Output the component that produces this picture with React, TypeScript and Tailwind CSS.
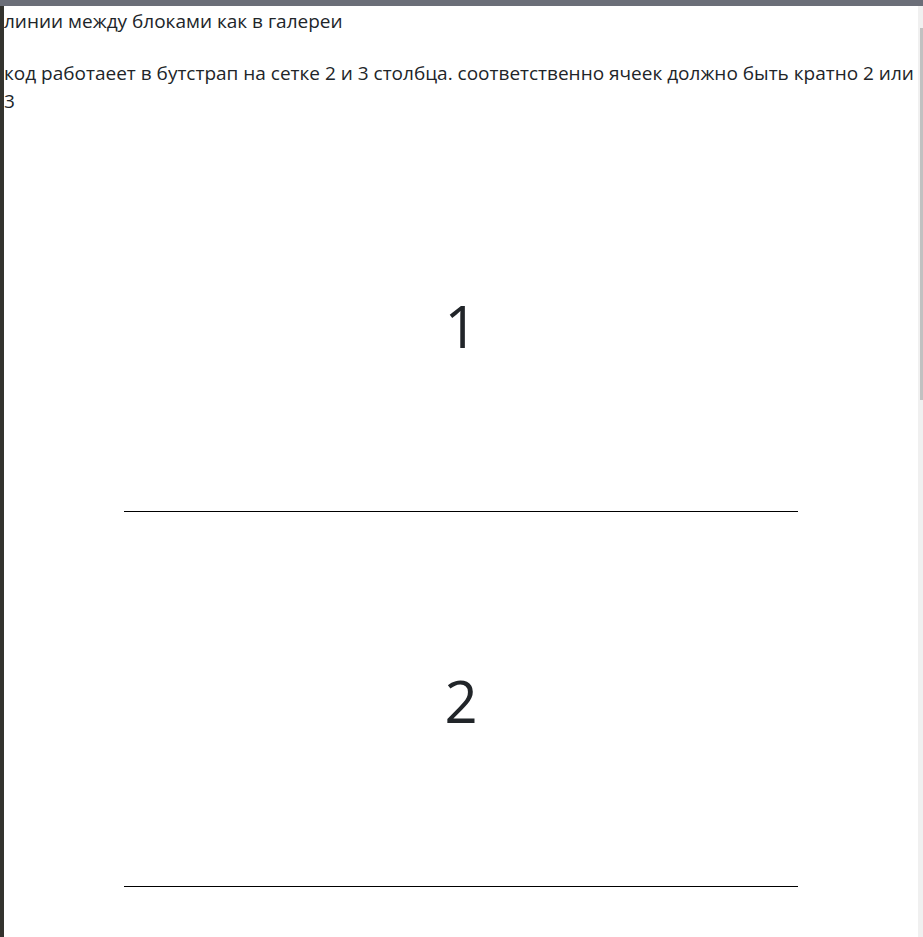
export default function App() {
  const cells = ["1", "2"]

  return (
    <div
      className="h-screen overflow-hidden flex flex-col bg-white text-[#212529]"
      style={{ fontFamily: '"Open Sans", "Noto Sans", sans-serif' }}
    >
      {/* top window strip */}
      <div className="h-[6px] bg-[#6b6e78] shrink-0" />

      <div className="flex flex-1 min-h-0">
        {/* left dark edge */}
        <div className="w-[4px] bg-[#33332e] shrink-0" />

        {/* page */}
        <div className="flex-1 min-w-0 overflow-hidden">
          <p className="text-[19px] leading-[28px] mt-[1px] mb-[24px]">линии между блоками как в галереи</p>
          <p className="text-[19px] leading-[28px] mb-[22px]">
            код работаеет в бутстрап на сетке 2 и 3 столбца. соответственно ячеек должно быть кратно 2 или 3
          </p>

          <div className="flex flex-col">
            {cells.map((c) => (
              <div key={c} className="flex flex-col h-[375px]">
                <div className="flex-1 flex items-center justify-center pt-[4px]">
                  <span className="text-[58px] leading-none">{c}</span>
                </div>
                <div className="h-px w-[674px] mx-auto bg-black" />
              </div>
            ))}
          </div>
        </div>

        {/* scrollbar */}
        <div className="w-[5px] bg-[#f0f0f0] shrink-0 pt-[22px] pl-[2px]">
          <div className="h-[372px] w-[3px] bg-[#c1c1c1]" />
        </div>
      </div>
    </div>
  )
}
